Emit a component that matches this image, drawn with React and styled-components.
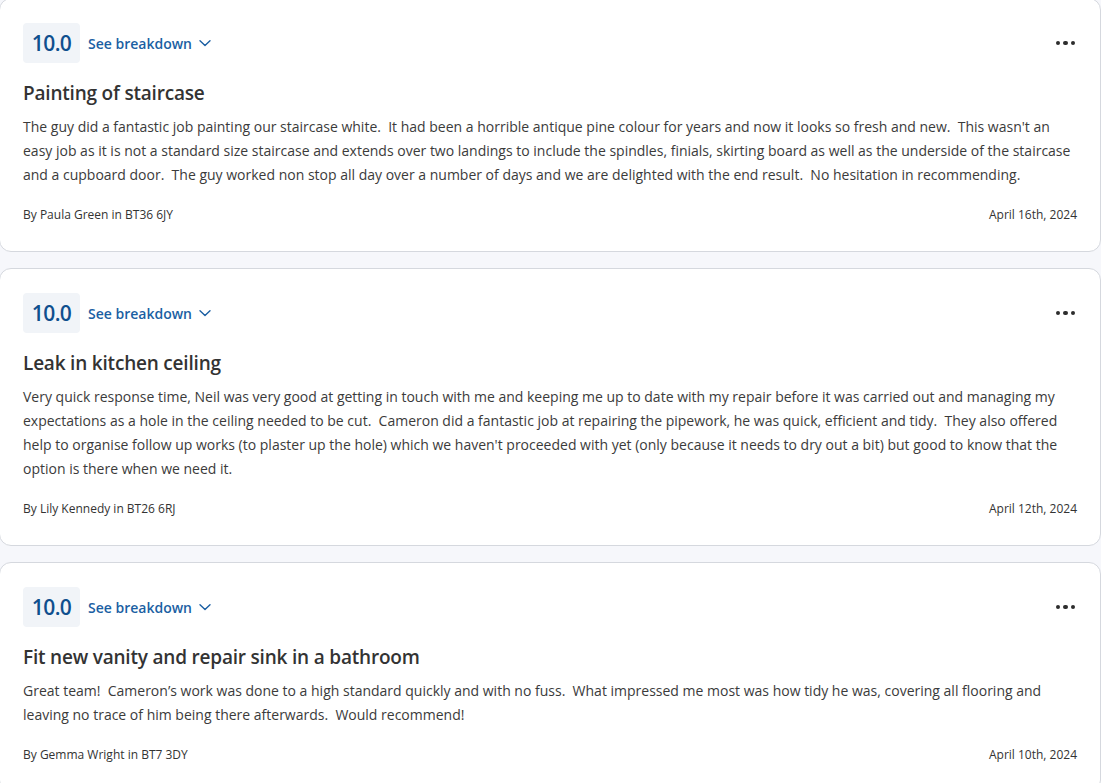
import React from "react";
import styled, { createGlobalStyle } from "styled-components";

const Global = createGlobalStyle`
  html, body { margin: 0; padding: 0; background: #f6f7fb; }
  body { font-family: "Open Sans", "Noto Sans", sans-serif; color: #333; overflow: hidden; }
`;

const List = styled.div`
  display: flex;
  flex-direction: column;
  gap: 16px;
  margin: -2px 0 0 -1px;
  width: calc(100% + 1px);
`;

const Card = styled.article`
  background: #fff;
  border: 1px solid #d5d8de;
  border-radius: 12px;
  padding: 24px 23px 27px 23px;
`;

const Header = styled.div`
  display: flex;
  align-items: center;
  height: 40px;
`;

const Score = styled.div`
  width: 57px;
  height: 40px;
  border-radius: 4px;
  background: #f1f4f8;
  color: #0f4f8e;
  font-size: 21px;
  font-weight: 600;
  display: flex;
  align-items: center;
  justify-content: center;
  letter-spacing: -0.6px;
`;

const Breakdown = styled.button`
  margin-left: 8px;
  border: 0;
  background: none;
  padding: 0;
  display: flex;
  align-items: center;
  gap: 6px;
  font-family: inherit;
  font-size: 14px;
  font-weight: 600;
  color: #1b5fa3;
  cursor: pointer;
`;

const More = styled.button`
  margin-left: auto;
  margin-right: 2px;
  border: 0;
  background: none;
  padding: 0;
  display: flex;
  gap: 3px;
  cursor: pointer;
`;

const Dot = styled.span`
  width: 4.5px;
  height: 4.5px;
  border-radius: 50%;
  background: #2d2d2d;
`;

const Title = styled.h2`
  margin: 16px 0 0;
  font-size: 19px;
  line-height: 28px;
  font-weight: 600;
  color: #333;
  letter-spacing: -0.2px;
`;

const Body = styled.p`
  margin: 8px 0 0;
  font-size: 14px;
  line-height: 24px;
  color: #3b3b3b;
  white-space: pre-wrap;
`;

const Footer = styled.div`
  margin-top: 19px;
  display: flex;
  justify-content: space-between;
  font-size: 12px;
  line-height: 18px;
  color: #333;
`;

const Chevron = () => (
  <svg width="14" height="14" viewBox="0 0 14 14" fill="none">
    <path d="M2 4.8 L7 9.6 L12 4.8" stroke="#1b5fa3" strokeWidth="1.4" strokeLinecap="round" strokeLinejoin="round" />
  </svg>
);

const reviews = [
  {
    title: "Painting of staircase",
    body: "The guy did a fantastic job painting our staircase white.  It had been a horrible antique pine colour for years and now it looks so fresh and new.  This wasn't an easy job as it is not a standard size staircase and extends over two landings to include the spindles, finials, skirting board as well as the underside of the staircase and a cupboard door.  The guy worked non stop all day over a number of days and we are delighted with the end result.  No hesitation in recommending.",
    by: "By Paula Green in BT36 6JY",
    date: "April 16th, 2024",
  },
  {
    title: "Leak in kitchen ceiling",
    body: "Very quick response time, Neil was very good at getting in touch with me and keeping me up to date with my repair before it was carried out and managing my expectations as a hole in the ceiling needed to be cut.  Cameron did a fantastic job at repairing the pipework, he was quick, efficient and tidy.  They also offered help to organise follow up works (to plaster up the hole) which we haven't proceeded with yet (only because it needs to dry out a bit) but good to know that the option is there when we need it.",
    by: "By Lily Kennedy in BT26 6RJ",
    date: "April 12th, 2024",
  },
  {
    title: "Fit new vanity and repair sink in a bathroom",
    body: "Great team!  Cameron\u2019s work was done to a high standard quickly and with no fuss.  What impressed me most was how tidy he was, covering all flooring and leaving no trace of him being there afterwards.  Would recommend!",
    by: "By Gemma Wright in BT7 3DY",
    date: "April 10th, 2024",
  },
];

export default function App() {
  return (
    <>
      <Global />
      <List>
        {reviews.map((r) => (
          <Card key={r.title}>
            <Header>
              <Score>10.0</Score>
              <Breakdown>
                See breakdown <Chevron />
              </Breakdown>
              <More aria-label="More options">
                <Dot />
                <Dot />
                <Dot />
              </More>
            </Header>
            <Title>{r.title}</Title>
            <Body>{r.body}</Body>
            <Footer>
              <span>{r.by}</span>
              <span>{r.date}</span>
            </Footer>
          </Card>
        ))}
      </List>
    </>
  );
}
